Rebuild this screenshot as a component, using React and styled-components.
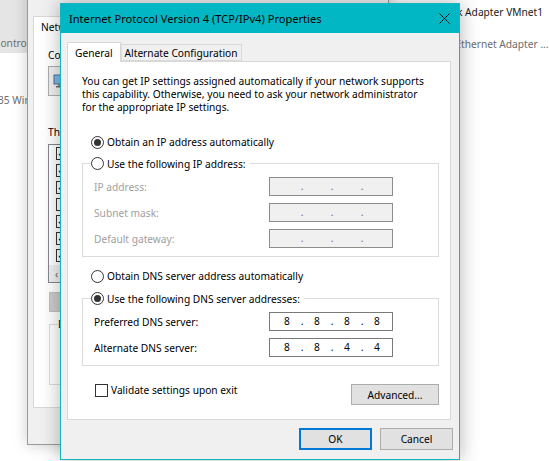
import React from "react";
import styled, { createGlobalStyle } from "styled-components";

const GlobalStyle = createGlobalStyle`
  html, body {
    margin: 0;
    padding: 0;
  }
  body {
    background: #ffffff;
    font-family: "Segoe UI", "Noto Sans", sans-serif;
    font-size: 10.2px;
    color: #000000;
  }
  * {
    box-sizing: border-box;
  }
`;

const Screen = styled.div`
  position: relative;
  width: 549px;
  height: 461px;
  overflow: hidden;
  background: #ffffff;
`;

/* ---------- explorer window behind everything ---------- */

const Explorer = styled.div`
  display: flex;
  height: 100%;
`;

const NavPane = styled.div`
  width: 200px;
  flex-shrink: 0;
  display: flex;
  flex-direction: column;
  overflow: hidden;
  color: #6d6d6d;
  white-space: nowrap;
  line-height: 16px;
`;

const NavCrumb = styled.div`
  height: 53px;
  display: flex;
  align-items: flex-end;
  padding-bottom: 2px;
  background: #e5e5e5;
`;

const NavItem = styled.div`
  margin-top: 39px;
`;

const Shifted = styled.span`
  margin-left: ${(p) => p.$shift}px;
`;

const TileList = styled.div`
  padding: 4px 0 0 180px;
  white-space: nowrap;
  line-height: 16px;
`;

const TileLine = styled.div`
  color: ${(p) => (p.$muted ? "#6d6d6d" : "#1a1a1a")};
`;

/* ---------- network properties window (inactive) ---------- */

const NetWindow = styled.div`
  position: absolute;
  z-index: 1;
  left: 27px;
  top: -30px;
  width: 362px;
  height: 475px;
  display: flex;
  flex-direction: column;
  background: #f0f0f0;
  border: 1px solid #9a9a9a;
  box-shadow: 0 0 14px rgba(0, 0, 0, 0.2);
`;

const NetTitle = styled.div`
  height: 29px;
  flex-shrink: 0;
  background: #ffffff;
`;

const NetBody = styled.div`
  flex: 1;
  display: flex;
  flex-direction: column;
  padding: 16px 6px 36px 5px;
`;

const TabStrip = styled.div`
  display: flex;
  align-items: flex-end;
  height: 19px;
  flex-shrink: 0;
`;

const Tab = styled.div`
  position: relative;
  z-index: 1;
  display: flex;
  align-items: center;
  white-space: nowrap;
  height: ${(p) => (p.$active ? 20 : 17)}px;
  margin-bottom: ${(p) => (p.$active ? -1 : 0)}px;
  padding: 0 ${(p) => (p.$active ? 7 : 3)}px;
  background: ${(p) => (p.$active ? "#ffffff" : "#f0f0f0")};
  border: 1px solid #d9d9d9;
  border-bottom: ${(p) => (p.$active ? "none" : "1px solid #d9d9d9")};
`;

const NetPage = styled.div`
  flex: 1;
  display: flex;
  flex-direction: column;
  align-items: flex-start;
  padding: 11px 0 0 14px;
  background: #ffffff;
  border: 1px solid #d9d9d9;
  line-height: 16px;
  white-space: nowrap;
`;

const AdapterBox = styled.div`
  margin-top: 3px;
  width: 300px;
  height: 30px;
  display: flex;
  align-items: center;
  padding-left: 4px;
  background: #f0f0f0;
  border: 1px solid #adadad;
`;

const Caption = styled.div`
  margin-top: ${(p) => p.$top}px;
`;

const ItemList = styled.div`
  margin-top: 4px;
  width: 310px;
  height: 139px;
  display: flex;
  flex-direction: column;
  background: #ffffff;
  border: 1px solid #828790;
`;

const ItemRow = styled.div`
  height: 17px;
  display: flex;
  align-items: center;
  padding-left: 7px;
`;

const SmallCheck = styled.span`
  width: 13px;
  height: 13px;
  display: flex;
  align-items: center;
  justify-content: center;
  border: 1px solid #333333;
  background: #ffffff;
`;

const ScrollRow = styled.div`
  margin-top: auto;
  height: 17px;
  display: flex;
  align-items: center;
  padding-left: 6px;
  background: #f0f0f0;
  color: #606060;
`;

const GreyButton = styled.div`
  margin: 9px 0 0 1px;
  width: 80px;
  height: 20px;
  background: #cccccc;
  border: 1px solid #bfbfbf;
`;

const DescGroup = styled.fieldset`
  margin: 4px 0 0 1px;
  padding: 0;
  width: 305px;
  height: 69px;
  min-width: 0;
  border: 1px solid #dcdcdc;
`;

const DescLegend = styled.legend`
  margin-left: 8px;
  padding: 0 3px 0 0;
  height: 17px;
  line-height: 17px;
`;

/* ---------- TCP/IPv4 dialog ---------- */

const Dialog = styled.div`
  position: absolute;
  z-index: 2;
  left: 60px;
  top: 3px;
  width: 400px;
  height: 457px;
  display: flex;
  flex-direction: column;
  background: #f0f0f0;
  border: 1px solid #17b5c3;
  box-shadow: 0 0 18px rgba(0, 0, 0, 0.3);
`;

const TitleBar = styled.div`
  height: 29px;
  flex-shrink: 0;
  display: flex;
  align-items: center;
  padding-left: 8px;
  background: #00b7c3;
`;

const TitleText = styled.div`
  flex: 1;
  font-size: 11.1px;
  white-space: nowrap;
`;

const CloseButton = styled.div`
  width: 30px;
  height: 29px;
  display: flex;
  align-items: center;
  justify-content: center;
`;

const DialogBody = styled.div`
  flex: 1;
  display: flex;
  flex-direction: column;
  padding: 9px 6px 9px 6px;
`;

const TabPage = styled.div`
  flex: 1;
  display: flex;
  flex-direction: column;
  margin-right: 2px;
  padding: 13px 11px 0 14px;
  background: #ffffff;
  border: 1px solid #d9d9d9;
`;

const Intro = styled.p`
  margin: 0;
  line-height: 13px;
  white-space: nowrap;
`;

const Option = styled.label`
  display: flex;
  align-items: center;
  gap: 3px;
  height: ${(p) => p.$h || 16}px;
  margin-top: ${(p) => p.$top || 0}px;
  padding-left: ${(p) => (p.$inset ? 9 : 0)}px;
  white-space: nowrap;
`;

const RadioCircle = styled.span`
  width: 13px;
  height: 13px;
  flex-shrink: 0;
  display: flex;
  align-items: center;
  justify-content: center;
  border: 1px solid #333333;
  border-radius: 50%;
  background: #ffffff;

  &::after {
    content: "";
    display: ${(p) => (p.$checked ? "block" : "none")};
    width: 7px;
    height: 7px;
    border-radius: 50%;
    background: #333333;
  }
`;

const Group = styled.fieldset`
  margin: ${(p) => p.$top}px 0 0;
  padding: 5px 0 8px;
  min-width: 0;
  border: 1px solid #dcdcdc;
`;

const GroupLegend = styled.legend`
  margin-left: 8px;
  padding: 0 4px 0 0;
`;

const FieldGrid = styled.div`
  display: grid;
  grid-template-columns: 175px 124px;
  row-gap: 7px;
  align-items: center;
  padding-left: 11px;
`;

const FieldLabel = styled.span`
  color: ${(p) => (p.$disabled ? "#a0a0a0" : "#000000")};
  white-space: nowrap;
`;

const IpBox = styled.div`
  width: 124px;
  height: 19px;
  display: flex;
  align-items: center;
  padding-left: 4px;
  line-height: 17px;
  border: 1px solid ${(p) => (p.$disabled ? "#8c8c8c" : "#7a7a7a")};
  background: ${(p) => (p.$disabled ? "#f0f0f0" : "#ffffff")};
  color: ${(p) => (p.$disabled ? "#6d6d6d" : "#000000")};
`;

const Octet = styled.span`
  width: 26px;
  text-align: center;
`;

const Dot = styled.span`
  width: 4px;
  text-align: center;
`;

const FooterRow = styled.div`
  display: flex;
  justify-content: space-between;
  align-items: flex-start;
  margin-top: 16px;
`;

const CheckLabel = styled.label`
  display: flex;
  align-items: center;
  gap: 3px;
  height: 16px;
  margin-left: 13px;
  white-space: nowrap;
`;

const CheckBox = styled.span`
  width: 13px;
  height: 13px;
  border: 1px solid #333333;
  background: #ffffff;
`;

const PushButton = styled.button`
  width: ${(p) => p.$w}px;
  height: ${(p) => p.$h}px;
  margin-top: ${(p) => p.$top || 0}px;
  padding: 0;
  font: inherit;
  color: #000000;
  background: #e1e1e1;
  border: ${(p) => (p.$primary ? "2px solid #0078d7" : "1px solid #adadad")};
`;

const ButtonRow = styled.div`
  display: flex;
  justify-content: flex-end;
  gap: 8px;
  margin-top: 8px;
`;

const Radio = ({ checked, children, ...rest }) => (
  <Option {...rest}>
    <RadioCircle $checked={checked} />
    {children}
  </Option>
);

const IpAddress = ({ value, disabled }) => {
  const parts = value ? value.split(".") : ["", "", "", ""];
  return (
    <IpBox $disabled={disabled}>
      {parts.map((part, i) => (
        <React.Fragment key={i}>
          <Octet>{part}</Octet>
          {i < 3 && <Dot>.</Dot>}
        </React.Fragment>
      ))}
    </IpBox>
  );
};

const Tick = () => (
  <svg width="9" height="8" viewBox="0 0 9 8">
    <path d="M1 4 L3.5 6.5 L8 1" fill="none" stroke="#222" strokeWidth="1.4" />
  </svg>
);

const NicIcon = () => (
  <svg width="18" height="14" viewBox="0 0 18 14">
    <rect x="1" y="1" width="12" height="9" fill="#7fb8e6" stroke="#4a6f8f" />
    <rect x="5" y="10" width="4" height="2" fill="#8a8a8a" />
    <rect x="3" y="12" width="8" height="1.5" fill="#6a6a6a" />
  </svg>
);

const CloseIcon = () => (
  <svg width="11" height="11" viewBox="0 0 11 11">
    <path d="M0.5 0.5 L10.5 10.5 M10.5 0.5 L0.5 10.5" stroke="#000" strokeWidth="1" />
  </svg>
);

const listItems = [true, true, true, false, true, true, true];

const ipRows = ["IP address:", "Subnet mask:", "Default gateway:"];

const App = () => {
  return (
    <>
      <GlobalStyle />
      <Screen>
        <Explorer>
          <NavPane>
            <NavCrumb>
              <Shifted $shift={-6}>Control Panel</Shifted>
            </NavCrumb>
            <NavItem>
              <Shifted $shift={-2}>35 Wireless</Shifted>
            </NavItem>
          </NavPane>
          <TileList>
            <TileLine>VMware Network Adapter VMnet1</TileLine>
            <TileLine $muted>Enabled</TileLine>
            <TileLine $muted>VMware Virtual Ethernet Adapter ...</TileLine>
          </TileList>
        </Explorer>

        <NetWindow>
          <NetTitle />
          <NetBody>
            <TabStrip>
              <Tab $active>Networking</Tab>
              <Tab>Sharing</Tab>
            </TabStrip>
            <NetPage>
              <div>Connect using:</div>
              <AdapterBox>
                <NicIcon />
              </AdapterBox>
              <Caption $top={28}>This connection uses the following items:</Caption>
              <ItemList>
                {listItems.map((on, i) => (
                  <ItemRow key={i}>
                    <SmallCheck>{on && <Tick />}</SmallCheck>
                  </ItemRow>
                ))}
                <ScrollRow>&lsaquo;</ScrollRow>
              </ItemList>
              <GreyButton />
              <DescGroup>
                <DescLegend>Description</DescLegend>
              </DescGroup>
            </NetPage>
          </NetBody>
        </NetWindow>

        <Dialog>
          <TitleBar>
            <TitleText>Internet Protocol Version 4 (TCP/IPv4) Properties</TitleText>
            <CloseButton>
              <CloseIcon />
            </CloseButton>
          </TitleBar>
          <DialogBody>
            <TabStrip>
              <Tab $active>General</Tab>
              <Tab>Alternate Configuration</Tab>
            </TabStrip>
            <TabPage>
              <Intro>
                You can get IP settings assigned automatically if your network supports
                <br />
                this capability. Otherwise, you need to ask your network administrator
                <br />
                for the appropriate IP settings.
              </Intro>

              <Radio checked $inset $top={20}>
                Obtain an IP address automatically
              </Radio>
              <Group $top={5}>
                <GroupLegend>
                  <Radio $h={17}>Use the following IP address:</Radio>
                </GroupLegend>
                <FieldGrid>
                  {ipRows.map((label) => (
                    <React.Fragment key={label}>
                      <FieldLabel $disabled>{label}</FieldLabel>
                      <IpAddress disabled />
                    </React.Fragment>
                  ))}
                </FieldGrid>
              </Group>

              <Radio $inset $top={11}>
                Obtain DNS server address automatically
              </Radio>
              <Group $top={6}>
                <GroupLegend>
                  <Radio checked $h={17}>
                    Use the following DNS server addresses:
                  </Radio>
                </GroupLegend>
                <FieldGrid>
                  <FieldLabel>Preferred DNS server:</FieldLabel>
                  <IpAddress value="8.8.8.8" />
                  <FieldLabel>Alternate DNS server:</FieldLabel>
                  <IpAddress value="8.8.4.4" />
                </FieldGrid>
              </Group>

              <FooterRow>
                <CheckLabel>
                  <CheckBox />
                  Validate settings upon exit
                </CheckLabel>
                <PushButton $w={88} $h={21} $top={2}>
                  Advanced...
                </PushButton>
              </FooterRow>
            </TabPage>
            <ButtonRow>
              <PushButton $primary $w={73} $h={22}>
                OK
              </PushButton>
              <PushButton $w={73} $h={22}>
                Cancel
              </PushButton>
            </ButtonRow>
          </DialogBody>
        </Dialog>
      </Screen>
    </>
  );
};

export default App;
